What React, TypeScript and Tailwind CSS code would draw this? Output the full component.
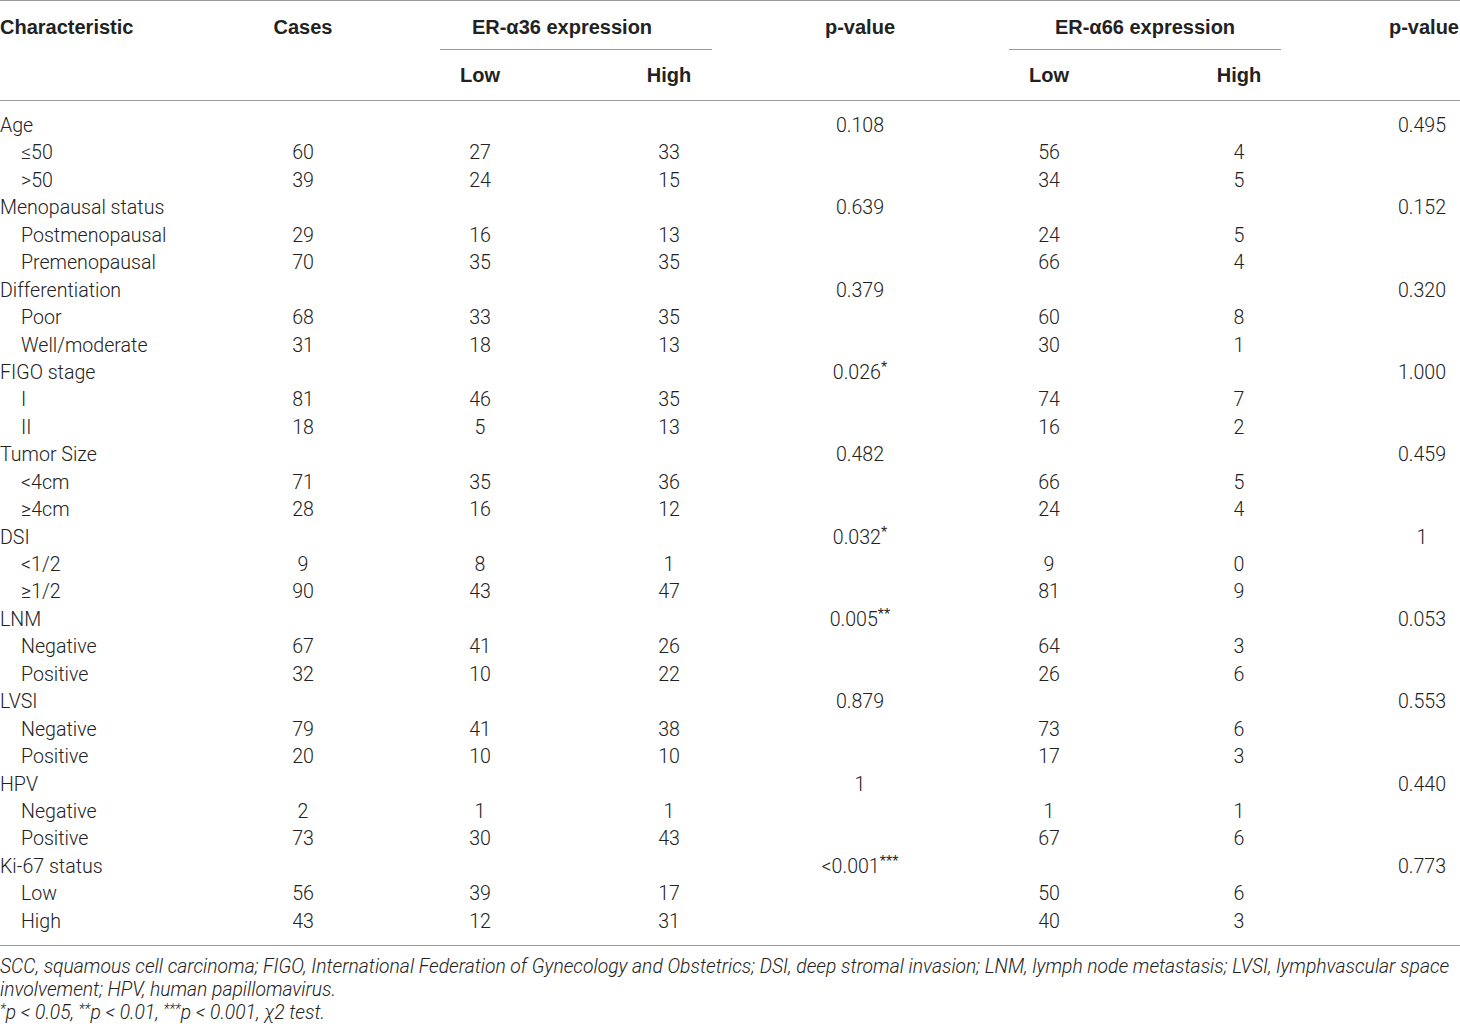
type PVal = { v: string; s?: string };

interface Group {
  label: string;
  p36: PVal;
  p66: PVal;
  rows: [string, string, string, string, string, string][];
}

const groups: Group[] = [
  {
    label: "Age",
    p36: { v: "0.108" },
    p66: { v: "0.495" },
    rows: [
      ["≤50", "60", "27", "33", "56", "4"],
      [">50", "39", "24", "15", "34", "5"],
    ],
  },
  {
    label: "Menopausal status",
    p36: { v: "0.639" },
    p66: { v: "0.152" },
    rows: [
      ["Postmenopausal", "29", "16", "13", "24", "5"],
      ["Premenopausal", "70", "35", "35", "66", "4"],
    ],
  },
  {
    label: "Differentiation",
    p36: { v: "0.379" },
    p66: { v: "0.320" },
    rows: [
      ["Poor", "68", "33", "35", "60", "8"],
      ["Well/moderate", "31", "18", "13", "30", "1"],
    ],
  },
  {
    label: "FIGO stage",
    p36: { v: "0.026", s: "*" },
    p66: { v: "1.000" },
    rows: [
      ["I", "81", "46", "35", "74", "7"],
      ["II", "18", "5", "13", "16", "2"],
    ],
  },
  {
    label: "Tumor Size",
    p36: { v: "0.482" },
    p66: { v: "0.459" },
    rows: [
      ["<4cm", "71", "35", "36", "66", "5"],
      ["≥4cm", "28", "16", "12", "24", "4"],
    ],
  },
  {
    label: "DSI",
    p36: { v: "0.032", s: "*" },
    p66: { v: "1" },
    rows: [
      ["<1/2", "9", "8", "1", "9", "0"],
      ["≥1/2", "90", "43", "47", "81", "9"],
    ],
  },
  {
    label: "LNM",
    p36: { v: "0.005", s: "**" },
    p66: { v: "0.053" },
    rows: [
      ["Negative", "67", "41", "26", "64", "3"],
      ["Positive", "32", "10", "22", "26", "6"],
    ],
  },
  {
    label: "LVSI",
    p36: { v: "0.879" },
    p66: { v: "0.553" },
    rows: [
      ["Negative", "79", "41", "38", "73", "6"],
      ["Positive", "20", "10", "10", "17", "3"],
    ],
  },
  {
    label: "HPV",
    p36: { v: "1" },
    p66: { v: "0.440" },
    rows: [
      ["Negative", "2", "1", "1", "1", "1"],
      ["Positive", "73", "30", "43", "67", "6"],
    ],
  },
  {
    label: "Ki-67 status",
    p36: { v: "<0.001", s: "***" },
    p66: { v: "0.773" },
    rows: [
      ["Low", "56", "39", "17", "50", "6"],
      ["High", "43", "12", "31", "40", "3"],
    ],
  },
];

const cols =
  "grid grid-cols-[210px_186px_168px_210px_172px_206px_174px_134px]";

function P({ p }: { p: PVal }) {
  return (
    <>
      {p.v}
      {p.s && <sup className="text-[16px] -top-[6px] font-['Liberation_Sans',sans-serif] font-normal">{p.s}</sup>}
    </>
  );
}

export default function App() {
  return (
    <div className="w-[1460px] h-[1030px] bg-white text-[#222] font-['Roboto','Liberation_Sans',sans-serif] overflow-hidden">
      {/* header */}
      <div className="border-t border-b border-[#9a9a9a]">
        <div className={`${cols} h-[49px] items-center font-bold text-[20px] font-['Liberation_Sans',sans-serif]`}>
          <div className="pt-[3px] whitespace-nowrap">Characteristic</div>
          <div className="text-center pt-[3px]">Cases</div>
          <div className="col-span-2 ml-[44px] mr-[62px] h-full flex items-center justify-center border-b border-[#9a9a9a] pt-[3px] pr-[28px] whitespace-nowrap">
            ER-α36 expression
          </div>
          <div className="text-center pt-[3px]">p-value</div>
          <div className="col-span-2 ml-[63px] mr-[45px] h-full flex items-center justify-center border-b border-[#9a9a9a] pt-[3px] whitespace-nowrap">
            ER-α66 expression
          </div>
          <div className="text-right pt-[3px] pr-[1px] whitespace-nowrap">p-value</div>
        </div>
        <div className={`${cols} h-[50px] items-center font-bold text-[20px] font-['Liberation_Sans',sans-serif]`}>
          <div />
          <div />
          <div className="text-center">Low</div>
          <div className="text-center">High</div>
          <div />
          <div className="text-center">Low</div>
          <div className="text-center">High</div>
          <div />
        </div>
      </div>

      {/* body */}
      <div className="pt-[11px] pb-[10px] border-b border-[#9a9a9a] text-[19.6px] font-light leading-[27.45px]">
        {groups.map((g) => (
          <div key={g.label}>
            <div className={`${cols} h-[27.45px]`}>
              <div className="whitespace-nowrap">{g.label}</div>
              <div />
              <div />
              <div />
              <div className="text-center whitespace-nowrap">
                <P p={g.p36} />
              </div>
              <div />
              <div />
              <div className="text-center pl-[58px] whitespace-nowrap">
                <P p={g.p66} />
              </div>
            </div>
            {g.rows.map((r, i) => (
              <div key={i} className={`${cols} h-[27.45px]`}>
                <div className="pl-[21px] whitespace-nowrap">{r[0]}</div>
                <div className="text-center">{r[1]}</div>
                <div className="text-center">{r[2]}</div>
                <div className="text-center">{r[3]}</div>
                <div />
                <div className="text-center">{r[4]}</div>
                <div className="text-center">{r[5]}</div>
                <div />
              </div>
            ))}
          </div>
        ))}
      </div>

      {/* footnotes */}
      <div className="pt-[9px] text-[19.3px] italic font-light leading-[23px]">
        <p className="whitespace-nowrap">
          SCC, squamous cell carcinoma; FIGO, International Federation of Gynecology and Obstetrics; DSI, deep stromal invasion; LNM, lymph node metastasis; LVSI, lymphvascular space
        </p>
        <p className="whitespace-nowrap">involvement; HPV, human papillomavirus.</p>
        <p className="whitespace-nowrap">
          <sup className="text-[14px] -top-[5px]">*</sup>p &lt; 0.05, <sup className="text-[14px] -top-[5px]">**</sup>p &lt; 0.01,{" "}
          <sup className="text-[14px] -top-[5px]">***</sup>p &lt; 0.001, χ2 test.
        </p>
      </div>
    </div>
  );
}
